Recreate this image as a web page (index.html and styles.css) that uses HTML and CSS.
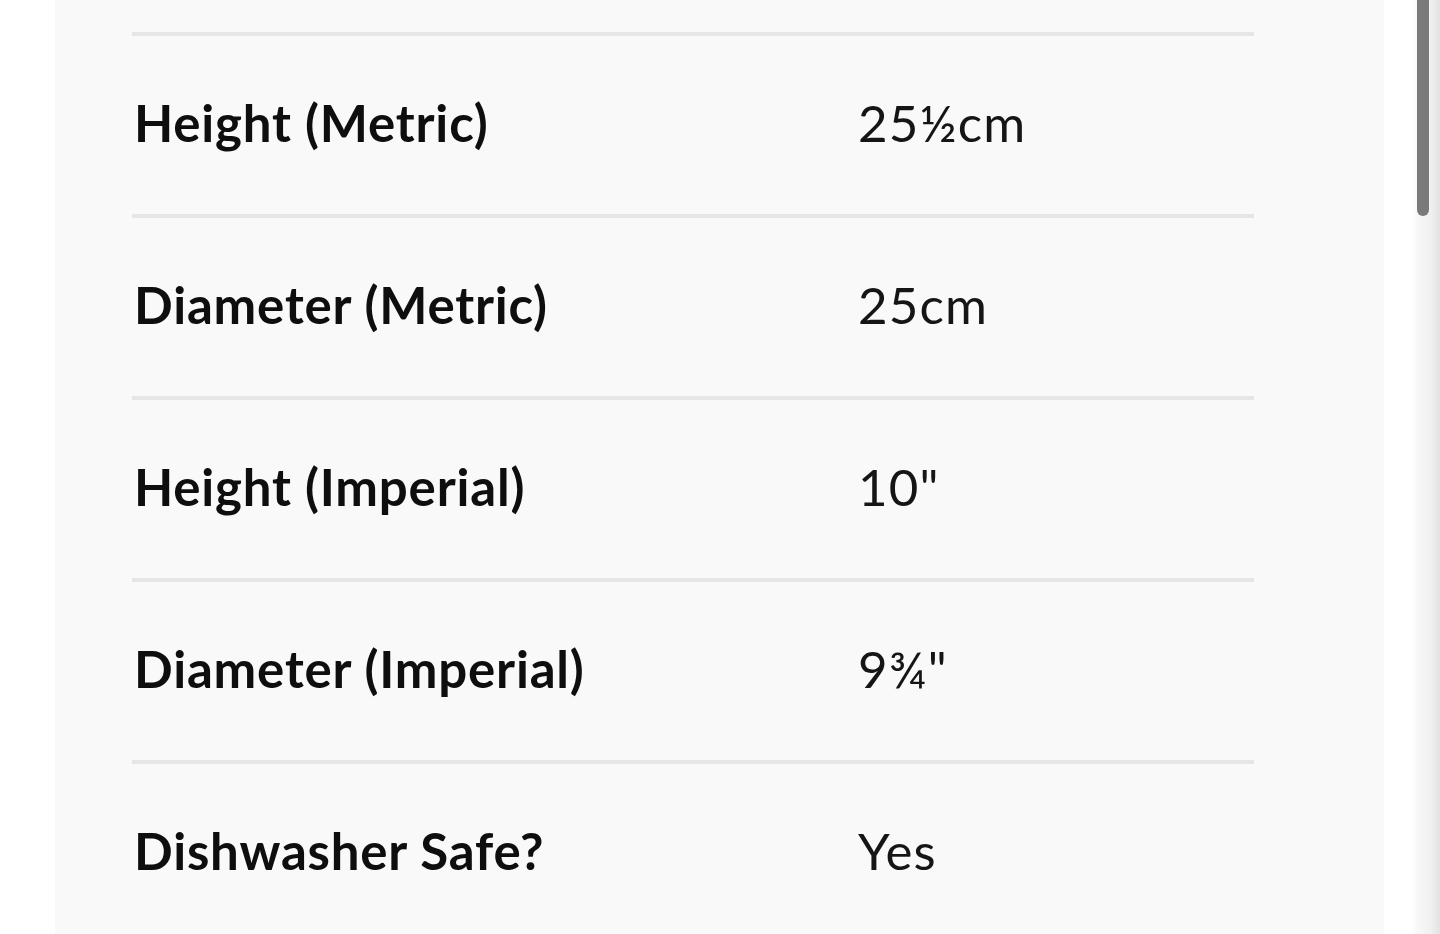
FILE: index.html
```html
<!DOCTYPE html>
<html lang="en">
<head>
<meta charset="utf-8">
<title>Specifications</title>
<link rel="stylesheet" href="styles.css">
</head>
<body>
<div class="page">
  <section class="panel">
    <dl class="specs">
      <div class="row"><dt>Height (Metric)</dt><dd>25½cm</dd></div>
      <div class="row"><dt>Diameter (Metric)</dt><dd>25cm</dd></div>
      <div class="row"><dt>Height (Imperial)</dt><dd>10"</dd></div>
      <div class="row"><dt>Diameter (Imperial)</dt><dd>9¾"</dd></div>
      <div class="row"><dt>Dishwasher Safe?</dt><dd>Yes</dd></div>
    </dl>
  </section>
</div>
<div class="scrollbar"><div class="thumb"></div></div>
</body>
</html>
```
FILE: styles.css
```css
html, body {
  margin: 0;
  padding: 0;
  height: 100%;
  overflow: hidden;
  background: #ffffff;
}
body {
  font-family: "Lato", "Noto Sans", sans-serif;
  color: #111;
}
.page {
  display: flex;
  height: 934px;
  padding-left: 55px;
}
.panel {
  width: 1329px;
  background: #f9f9f9;
  padding: 32px 0 0 77px;
  box-sizing: border-box;
}
.specs {
  margin: 0;
  width: 1122px;
}
.row {
  display: flex;
  align-items: center;
  height: 182px;
  padding-bottom: 6px;
  border-top: 4px solid #e6e6e6;
  box-sizing: border-box;
}
.row dt {
  width: 724px;
  margin: 0;
  padding-left: 2px;
  font-weight: 700;
  font-size: 51px;
  letter-spacing: 0.8px;
  color: #0e0e0e;
}
.row dd {
  margin: 0;
  font-weight: 400;
  font-size: 51px;
  letter-spacing: 1.2px;
  color: #151515;
}
.scrollbar {
  position: absolute;
  top: 0;
  right: 0;
  width: 56px;
  height: 934px;
  background: linear-gradient(to right, #ffffff 0px, #ffffff 28px, #f7f7f7 34px, #f1f1f1 46px, #e2e2e2 56px);
}
.thumb {
  position: absolute;
  left: 33px;
  top: -10px;
  width: 12px;
  height: 226px;
  border-radius: 6px;
  background: #7a7a7a;
}
```
